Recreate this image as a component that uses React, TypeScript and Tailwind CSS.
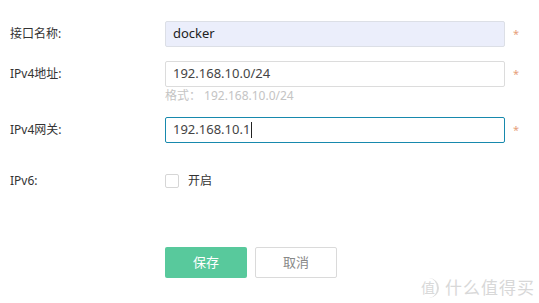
export default function App() {
  const font = { fontFamily: '"Noto Sans", "Noto Sans CJK SC", sans-serif' };
  return (
    <div className="relative h-[303px] w-[539px] overflow-hidden bg-white text-[#333]" style={font}>
      <div className="flex flex-col pt-[21px]">
        <Row label="接口名称:">
          <div className="flex h-[26px] w-[340px] items-center rounded-[2px] border border-[#dcdfe6] bg-[#ebeefb] px-[7px] text-[13px] text-[#222]">
            docker
          </div>
        </Row>
        <div className="mt-[14px]">
          <Row label="IPv4地址:">
            <div className="flex h-[26px] w-[340px] items-center rounded-[2px] border border-[#dcdcdc] bg-white px-[7px] text-[13px] text-[#444]">
              192.168.10.0/24
            </div>
          </Row>
          <div className="flex h-[18px] items-center pl-[165px] text-[12px] text-[#c4c4c4]">
            格式： 192.168.10.0/24
          </div>
        </div>
        <div className="mt-[12px]">
          <Row label="IPv4网关:">
            <div className="flex h-[26px] w-[340px] items-center rounded-[2px] border border-[#1789ad] bg-white px-[7px] text-[13px] text-[#444]">
              192.168.10.1
              <span className="ml-[1px] inline-block h-[16px] w-px bg-[#222]" />
            </div>
          </Row>
        </div>
        <div className="mt-[25px] flex h-[26px] items-center">
          <div className="w-[165px] pl-[10px] text-[12px] text-[#333]">IPv6:</div>
          <div className="flex items-center gap-[9px]">
            <span className="block h-[14px] w-[14px] rounded-[2px] border border-[#d6d6d6] bg-white" />
            <span className="text-[12px] text-[#333]">开启</span>
          </div>
        </div>
        <div className="mt-[53px] flex gap-[8px] pl-[165px]">
          <button className="flex h-[31px] w-[82px] items-center justify-center rounded-[2px] bg-[#58c99c] text-[13px] text-white">
            保存
          </button>
          <button className="flex h-[31px] w-[82px] items-center justify-center rounded-[2px] border border-[#dadada] bg-white text-[13px] text-[#888]">
            取消
          </button>
        </div>
      </div>
      <div className="absolute right-[4px] top-[275px] flex items-center gap-[6px] text-[#d8d8d8]">
        <span className="flex h-[20px] w-[20px] items-center justify-center rounded-full border-r-2 border-[#dcdcdc] text-[14px]">
          值
        </span>
        <span className="text-[17px] tracking-[1px]">什么值得买</span>
      </div>
    </div>
  );
}

function Row({ label, children }: { label: string; children: React.ReactNode }) {
  return (
    <div className="flex h-[26px] items-center">
      <div className="w-[165px] pl-[10px] text-[12px] text-[#333]">{label}</div>
      {children}
      <span className="ml-[8px] text-[11px] text-[#e6a07a]">*</span>
    </div>
  );
}
